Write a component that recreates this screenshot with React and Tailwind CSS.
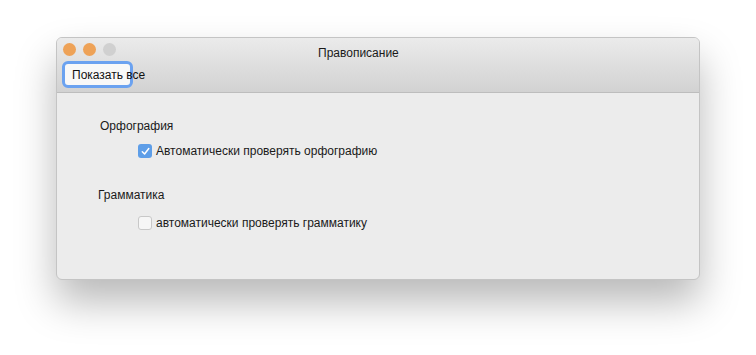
export default function App() {
  return (
    <div className="h-[355px] w-[756px] bg-white pl-[56px] pt-[37px] font-['Liberation_Sans',sans-serif]">
      <div className="flex h-[243px] w-[644px] flex-col overflow-hidden rounded-[6px] border border-[#c4c4c4] bg-[#ececec] shadow-[0_22px_40px_rgba(0,0,0,0.28)]">
        <div className="flex h-[55px] flex-col border-b border-[#bdbdbd] bg-gradient-to-b from-[#ebebeb] to-[#d2d2d2]">
          <div className="relative flex h-[23px] items-center gap-[7px] pl-[6px]">
            <span className="h-[13px] w-[13px] rounded-full bg-[#eea257]" />
            <span className="h-[13px] w-[13px] rounded-full bg-[#eea257]" />
            <span className="h-[13px] w-[13px] rounded-full bg-[#d0d0d0]" />
            <span className="absolute left-[261px] top-[6px] text-[12px] text-[#1a1a1a]">Правописание</span>
          </div>
          <div className="pl-[5px]">
            <button className="h-[27px] w-[71px] overflow-visible whitespace-nowrap rounded-[6px] border-[3px] border-[#6ba2f0] bg-[#f8f8f8] pl-[7px] text-left text-[12px] text-[#111]">
              Показать все
            </button>
          </div>
        </div>
        <div className="flex flex-col pl-[43px] pt-[24px] text-[12px] text-[#1a1a1a]">
          <div>Орфография</div>
          <label className="ml-[38px] mt-[7px] flex items-center gap-[4px]">
            <span className="flex h-[14px] w-[14px] items-center justify-center rounded-[3px] bg-[#5e9ee8]">
              <svg viewBox="0 0 12 12" className="h-[11px] w-[11px]">
                <path d="M2.5 6.2 L5 8.8 L9.6 2.8" fill="none" stroke="white" strokeWidth="1.6" strokeLinecap="round" strokeLinejoin="round" />
              </svg>
            </span>
            <span>Автоматически проверять орфографию</span>
          </label>
          <div className="mt-[26px] -ml-[2px]">Грамматика</div>
          <label className="ml-[38px] mt-[10px] flex items-center gap-[4px]">
            <span className="h-[14px] w-[14px] rounded-[3px] border border-[#c8c8c8] bg-[#f6f6f6]" />
            <span>автоматически проверять грамматику</span>
          </label>
        </div>
      </div>
    </div>
  );
}
